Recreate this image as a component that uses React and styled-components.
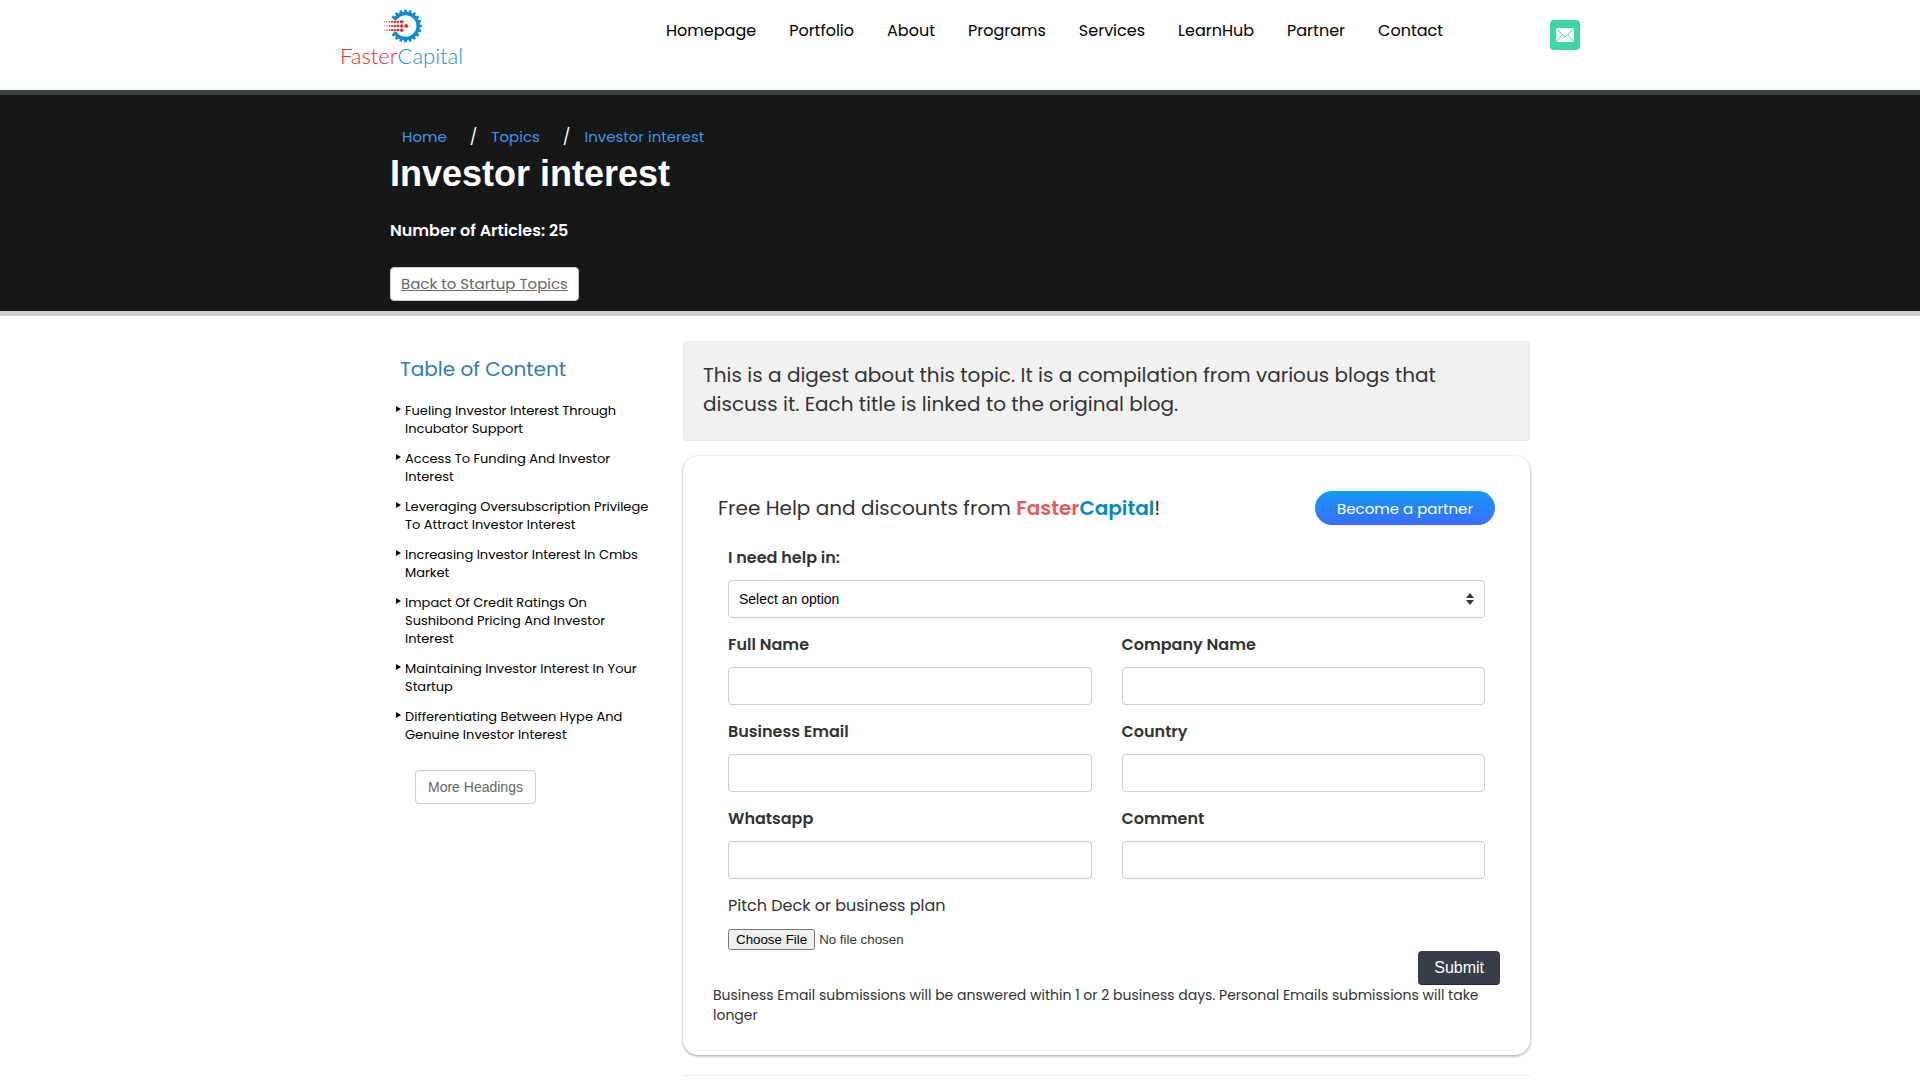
import React from "react";
import styled, { createGlobalStyle } from "styled-components";

const sans = `Poppins, Inter, "Noto Sans", sans-serif`;
const arial = `"Liberation Sans", Arial, sans-serif`;

const GlobalStyle = createGlobalStyle`
  *, *::before, *::after { box-sizing: border-box; }
  html { scrollbar-width: none; }
  body {
    margin: 0;
    background: #fff;
    color: #333;
    font-family: ${sans};
    font-size: 16px;
    line-height: 24px;
  }
`;

const Header = styled.header`
  background: #fff;
  border-bottom: 5px solid #373f44;
`;

const HeaderInner = styled.div`
  display: flex;
  align-items: flex-start;
  justify-content: space-between;
  max-width: 1270px;
  min-height: 90px;
  margin: 0 auto;
  padding: 0 15px;
`;

const Logo = styled.a`
  display: flex;
  flex-direction: column;
  align-items: center;
  padding-top: 9px;
  text-decoration: none;
`;

const LogoText = styled.span`
  font-family: Lato, sans-serif;
  font-size: 22px;
  font-weight: 300;
  line-height: 26px;
  color: ${(p) => p.$color};
`;

const LogoName = styled.span`
  display: flex;
`;

const Nav = styled.nav`
  display: flex;
  gap: 33px;
  padding: 19px 0 0 96px;
`;

const NavLink = styled.a`
  color: #000;
  text-decoration: none;
`;

const MailLink = styled.a`
  display: flex;
  align-items: center;
  justify-content: center;
  width: 30px;
  height: 30px;
  margin-top: 20px;
  border-radius: 4px;
  background: #3ed6a8;
`;

const Hero = styled.section`
  background: #171717;
  border-bottom: 5px solid #ccc;
  color: #fff;
`;

const Container = styled.div`
  width: 100%;
  max-width: 1170px;
  margin: 0 auto;
  padding: 0 15px;
`;

const HeroInner = styled(Container)`
  padding-top: 30px;
  padding-bottom: 10px;
`;

const Crumbs = styled.ol`
  display: flex;
  margin: 0;
  padding: 0 0 0 12px;
  list-style: none;
`;

const Crumb = styled.li`
  display: flex;
  & + &::before {
    content: "/";
    padding: 0 14px 0 23px;
    font-size: 16px;
  }
`;

const CrumbLink = styled.a`
  color: #3c97e8;
  font-size: 15px;
  text-decoration: none;
`;

const PageTitle = styled.h1`
  margin: 5px 0 0;
  font-family: ${arial};
  font-size: 36px;
  line-height: 40px;
`;

const Count = styled.p`
  margin: 25px 0 24px;
  font-weight: 600;
`;

const BackLink = styled.a`
  display: inline-block;
  padding: 6px 10px;
  border: 1px solid #ccc;
  border-radius: 4px;
  background: #fff;
  color: #666;
  font-size: 15px;
  line-height: 20px;
  vertical-align: top;
`;

const Page = styled(Container)`
  display: grid;
  grid-template-columns: minmax(0, 263px) minmax(0, 1fr);
  gap: 30px;
  padding-top: 25px;
`;

const TocTitle = styled.h2`
  margin: 16px 0 21px 10px;
  color: #337ab7;
  font-size: 20px;
  font-weight: 400;
  line-height: 24px;
`;

const TocList = styled.ul`
  display: flex;
  flex-direction: column;
  gap: 12px;
  margin: 0 0 26px;
  padding: 0 2px 0 15px;
  list-style: none;
`;

const TocItem = styled.li`
  position: relative;
  font-size: 13px;
  line-height: 18px;
  &::before {
    content: "";
    position: absolute;
    top: 4px;
    left: -9px;
    border: 3px solid transparent;
    border-left: 5px solid #000;
    border-right: 0;
  }
`;

const TocLink = styled.a`
  color: #000;
  text-decoration: none;
`;

const MoreButton = styled.button`
  height: 34px;
  margin-left: 25px;
  padding: 0 12px;
  border: 1px solid #ccc;
  border-radius: 4px;
  background: #fff;
  color: #666;
  font-family: ${arial};
  font-size: 14px;
`;

const Digest = styled.p`
  margin: 0 0 15px;
  padding: 19px 19px 21px;
  border: 1px solid #e8e8e8;
  border-radius: 4px;
  background: #f1f1f1;
  font-size: 20px;
  line-height: 29px;
`;

const Card = styled.form`
  padding: 35px 30px 30px;
  border-radius: 15px;
  background: #fff;
  box-shadow: 0 1px 3px rgba(0, 0, 0, 0.4);
`;

const CardHead = styled.div`
  display: flex;
  align-items: center;
  justify-content: space-between;
  padding: 0 5px;
`;

const CardTitle = styled.h2`
  margin: 0;
  font-size: 20px;
  font-weight: 400;
  line-height: 24px;
`;

const Brand = styled.strong`
  font-weight: 600;
  color: ${(p) => p.$color};
`;

const Pill = styled.button`
  height: 34px;
  padding: 0 22px;
  border: 0;
  border-radius: 17px;
  background: linear-gradient(#169bf3, #3a6cff);
  color: #fff;
  font-family: ${sans};
  font-size: 15px;
`;

const Fields = styled.div`
  display: grid;
  grid-template-columns: 1fr 1fr;
  gap: 15px 30px;
  padding: 21px 15px 0;
`;

const Field = styled.div`
  display: flex;
  flex-direction: column;
  gap: 10px;
  grid-column: ${(p) => (p.$wide ? "1 / -1" : "auto")};
`;

const Label = styled.label`
  font-weight: ${(p) => (p.$plain ? 400 : 600)};
`;

const Input = styled.input`
  width: 100%;
  height: 38px;
  padding: 0 10px;
  border: 1px solid #ccc;
  border-radius: 4px;
  background: #fff;
  font-family: ${arial};
  font-size: 14px;
`;

const SelectWrap = styled.div`
  position: relative;
`;

const Select = styled.select`
  display: block;
  width: 100%;
  height: 38px;
  padding: 0 10px;
  appearance: none;
  border: 1px solid #ccc;
  border-radius: 4px;
  background: #fff;
  color: #000;
  font-family: ${arial};
  font-size: 14px;
`;

const SelectArrows = styled.svg`
  position: absolute;
  top: 13px;
  right: 11px;
  pointer-events: none;
`;

const FileInput = styled.input`
  padding: 1px 0;
  font-family: ${arial};
`;

const Actions = styled.div`
  display: flex;
  justify-content: flex-end;
`;

const Submit = styled.button`
  height: 34px;
  padding: 0 16px;
  border: 0;
  border-bottom: 1px solid #22272d;
  border-radius: 4px;
  background: #373e48;
  color: #fff;
  font-family: ${arial};
  font-size: 16px;
`;

const Note = styled.p`
  margin: 0;
  font-size: 14px;
  line-height: 20px;
`;

const Divider = styled.hr`
  margin: 20px 0;
  border: 0;
  border-top: 1px solid #eee;
`;

const nav = ["Homepage", "Portfolio", "About", "Programs", "Services", "LearnHub", "Partner", "Contact"];

const topics = [
  "Fueling Investor Interest Through Incubator Support",
  "Access To Funding And Investor Interest",
  "Leveraging Oversubscription Privilege To Attract Investor Interest",
  "Increasing Investor Interest In Cmbs Market",
  "Impact Of Credit Ratings On Sushibond Pricing And Investor Interest",
  "Maintaining Investor Interest In Your Startup",
  "Differentiating Between Hype And Genuine Investor Interest",
];

const fields = [
  ["name", "Full Name", "text"],
  ["company", "Company Name", "text"],
  ["email", "Business Email", "email"],
  ["country", "Country", "text"],
  ["whatsapp", "Whatsapp", "tel"],
  ["comment", "Comment", "text"],
];

const dots = [
  [4.5, 0.5],
  [7, 0.6],
  [9.5, 0.9],
  [12, 1.1],
  [14.8, 1.3],
  [17.8, 1.4],
  [21.7, 1.8],
];

function GearMark() {
  const teeth = [];
  for (let a = -144; a <= 144; a += 18) teeth.push(a);
  return (
    <svg width="42" height="34" viewBox="1 0 42 34" aria-hidden="true">
      <path d="M14.6 10.8A12.6 12.6 0 1 1 14.6 23.2" fill="none" stroke="#0d8bd6" strokeWidth="3.6" />
      {teeth.map((a) => (
        <rect key={a} x="39" y="15.7" width="2.8" height="2.6" fill="#0d8bd6" transform={`rotate(${a} 25.5 17)`} />
      ))}
      <rect x="3" y="11" width="17" height="12" fill="#fff" />
      {[12.8, 17, 21.2].map((y) =>
        dots.map(([x, r]) => <circle key={`${x}-${y}`} cx={x} cy={y} r={r} fill="#e6302b" />)
      )}
      <circle cx="26.3" cy="17" r="1.9" fill="#e6302b" />
    </svg>
  );
}

export default function App() {
  return (
    <>
      <GlobalStyle />
      <Header>
        <HeaderInner>
          <Logo href="#" aria-label="FasterCapital">
            <GearMark />
            <LogoName>
              <LogoText $color="#e6302b">Faster</LogoText>
              <LogoText $color="#1b92d8">Capital</LogoText>
            </LogoName>
          </Logo>
          <Nav>
            {nav.map((item) => (
              <NavLink key={item} href="#">{item}</NavLink>
            ))}
          </Nav>
          <MailLink href="#" aria-label="Email">
            <svg width="18" height="14" viewBox="0 0 18 14" aria-hidden="true">
              <rect width="18" height="14" rx="1" fill="#fff" />
              <path d="M0.5 1L9 9L17.5 1M0.5 13.5L6 7M17.5 13.5L12 7" fill="none" stroke="#3ed6a8" strokeWidth="1" />
            </svg>
          </MailLink>
        </HeaderInner>
      </Header>

      <Hero>
        <HeroInner>
          <Crumbs>
            {["Home", "Topics", "Investor interest"].map((c) => (
              <Crumb key={c}><CrumbLink href="#">{c}</CrumbLink></Crumb>
            ))}
          </Crumbs>
          <PageTitle>Investor interest</PageTitle>
          <Count>Number of Articles: 25</Count>
          <BackLink href="#">Back to Startup Topics</BackLink>
        </HeroInner>
      </Hero>

      <Page as="main">
        <aside>
          <TocTitle>Table of Content</TocTitle>
          <TocList>
            {topics.map((t) => (
              <TocItem key={t}><TocLink href="#">{t}</TocLink></TocItem>
            ))}
          </TocList>
          <MoreButton type="button">More Headings</MoreButton>
        </aside>
        <section>
          <Digest>
            This is a digest about this topic. It is a compilation from various blogs that discuss it. Each title is
            linked to the original blog.
          </Digest>
          <Card>
            <CardHead>
              <CardTitle>
                Free Help and discounts from <Brand $color="#e55c52">Faster</Brand>
                <Brand $color="#0788cb">Capital</Brand>!
              </CardTitle>
              <Pill type="button">Become a partner</Pill>
            </CardHead>
            <Fields>
              <Field $wide>
                <Label htmlFor="help">I need help in:</Label>
                <SelectWrap>
                  <Select id="help">
                    <option>Select an option</option>
                  </Select>
                  <SelectArrows width="8" height="12" viewBox="0 0 8 12" aria-hidden="true">
                    <path d="M4 0L8 5H0ZM4 12L0 7H8Z" fill="#333" />
                  </SelectArrows>
                </SelectWrap>
              </Field>
              {fields.map(([id, label, type]) => (
                <Field key={id}>
                  <Label htmlFor={id}>{label}</Label>
                  <Input id={id} type={type} />
                </Field>
              ))}
              <Field $wide>
                <Label $plain htmlFor="deck">Pitch Deck or business plan</Label>
                <FileInput id="deck" type="file" />
              </Field>
            </Fields>
            <Actions>
              <Submit type="button">Submit</Submit>
            </Actions>
            <Note>
              Business Email submissions will be answered within 1 or 2 business days. Personal Emails submissions will
              take longer
            </Note>
          </Card>
          <Divider />
        </section>
      </Page>
    </>
  );
}
